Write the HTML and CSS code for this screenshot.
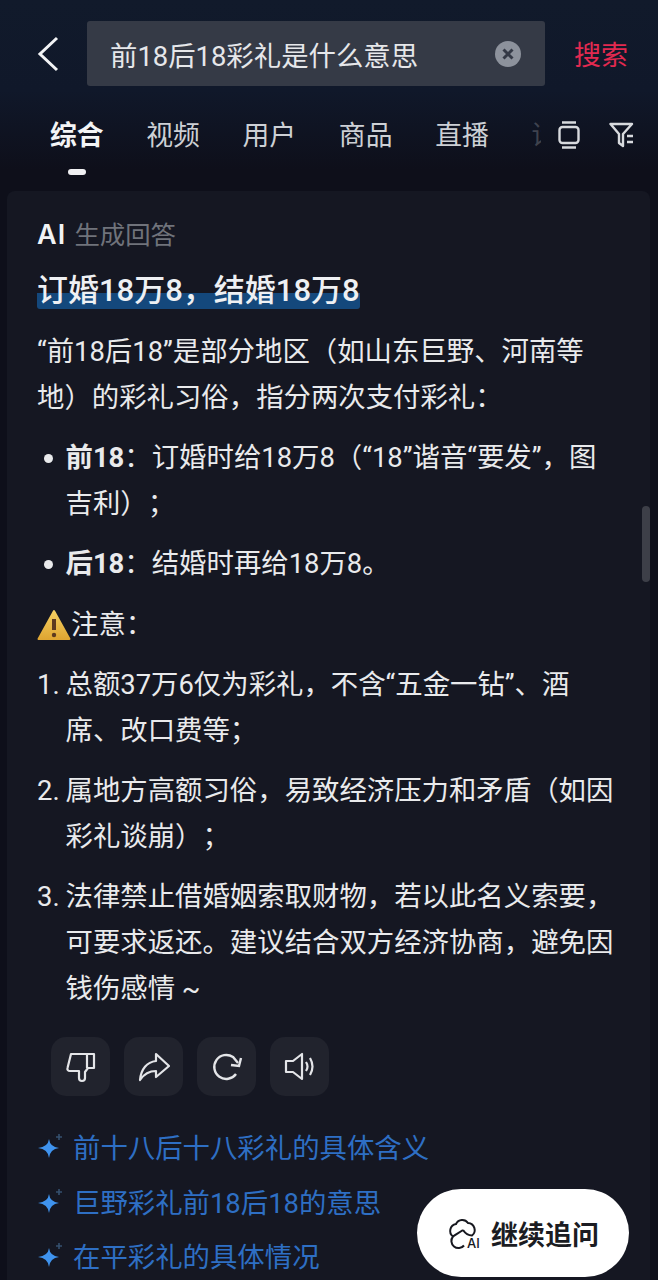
FILE: index.html
```html
<!DOCTYPE html>
<html lang="zh-CN">
<head>
    <meta charset="UTF-8">
    <title>搜索结果</title>
    <link rel="stylesheet" href="styles.css">
</head>
<body>
    <div class="page">
        <div class="search-bar">
            <svg class="back" width="24" height="36" viewBox="0 0 24 36"><path d="M20 2 L3 18 L20 34" fill="none" stroke="#f2f3f5" stroke-width="3"/></svg>
            <div class="search-box">
                <span class="query">前18后18彩礼是什么意思</span>
                <svg class="clear" width="26" height="26" viewBox="0 0 26 26"><circle cx="13" cy="13" r="13" fill="#8d929c"/><path d="M8.5 8.5 L17.5 17.5 M17.5 8.5 L8.5 17.5" stroke="#343946" stroke-width="3"/></svg>
            </div>
            <span class="search-btn">搜索</span>
        </div>

        <div class="tabs">
            <div class="tab-list">
                <span class="tab active">综合</span>
                <span class="tab">视频</span>
                <span class="tab">用户</span>
                <span class="tab">商品</span>
                <span class="tab">直播</span>
                <span class="tab tab-cut">话题</span>
            </div>
            <svg class="tab-icon" width="24" height="28" viewBox="0 0 24 28"><path d="M5 1.5 H19 M5 26.5 H19" stroke="#d8dade" stroke-width="2.4"/><rect x="2.5" y="6" width="19" height="16" rx="3" fill="none" stroke="#d8dade" stroke-width="2.4"/></svg>
            <svg class="tab-icon filter" width="26" height="26" viewBox="0 0 26 26"><path d="M1.5 2 H23 L14 12 V24 L10 21 V12 Z" fill="none" stroke="#d8dade" stroke-width="2.4" stroke-linejoin="round"/><path d="M18 14 H24 M18 20 H24" stroke="#d8dade" stroke-width="2.4"/></svg>
        </div>
        <div class="tab-mark"></div>

        <div class="card">
            <div class="ai-label"><b>AI</b> 生成回答</div>
            <h2 class="answer-title"><span>订婚18万8，结婚18万8</span></h2>
            <p class="para">“前18后18”是部分地区（如山东巨野、河南等地）的彩礼习俗，指分两次支付彩礼：</p>
            <ul class="bullets">
                <li><b>前18</b>：订婚时给18万8（“18”谐音“要发”，图吉利）；</li>
                <li><b>后18</b>：结婚时再给18万8。</li>
            </ul>
            <p class="para note"><svg width="34" height="32" viewBox="0 0 34 32"><defs><linearGradient id="warn" x1="0" y1="0" x2="0" y2="1"><stop offset="0" stop-color="#f4cf62"/><stop offset="1" stop-color="#dfa632"/></linearGradient></defs><path d="M17 2 L32.5 30 H1.5 Z" fill="url(#warn)" stroke="url(#warn)" stroke-width="2" stroke-linejoin="round"/><path d="M17 10 V21" stroke="#5c3a20" stroke-width="4"/><circle cx="17" cy="26" r="2.2" fill="#5c3a20"/></svg>注意：</p>
            <ol class="steps">
                <li>总额37万6仅为彩礼，不含“五金一钻”、酒席、改口费等；</li>
                <li>属地方高额习俗，易致经济压力和矛盾（如因彩礼谈崩）；</li>
                <li>法律禁止借婚姻索取财物，若以此名义索要，可要求返还。建议结合双方经济协商，避免因钱伤感情 ~</li>
            </ol>

            <div class="actions">
                <div class="action"><svg width="32" height="32" viewBox="0 0 32 32"><path d="M6 3 H29 V17 H23 L20 21 V27 C20 31 14 31 14 27 V20 H5 C3 20 2 18.500 2.500 17 Z M22 3 V17" fill="none" stroke="#e4e5e8" stroke-width="2.2" stroke-linejoin="round"/></svg></div>
                <div class="action"><svg width="32" height="32" viewBox="0 0 32 32"><path d="M18 3 L31 15 L18 26 V20 C11 20 6 23 2 29 C3 18 9 11 18 10 Z" fill="none" stroke="#e4e5e8" stroke-width="2.2" stroke-linejoin="round"/></svg></div>
                <div class="action"><svg width="32" height="32" viewBox="0 0 32 32"><path d="M25 23 A12 12 0 1 1 22 6 L27 12" fill="none" stroke="#e4e5e8" stroke-width="2.4"/><path d="M20 14 L28 15 L30 7" fill="none" stroke="#e4e5e8" stroke-width="2.4"/></svg></div>
                <div class="action"><svg width="32" height="32" viewBox="0 0 32 32"><path d="M2 10 H9 L18 3 V28 L9 21 H2 Z" fill="none" stroke="#e4e5e8" stroke-width="2.2" stroke-linejoin="round"/><path d="M22 11 Q25 15.500 22 20 M26 7 Q31 15.500 26 24" fill="none" stroke="#e4e5e8" stroke-width="2.2"/></svg></div>
            </div>

            <ul class="suggest">
                <li><svg width="26" height="26" viewBox="0 0 26 26"><path d="M12 6 Q13 14 22 15 Q13 16 12 25 Q11 16 1 15 Q11 14 12 6 Z" fill="#3f93ee"/><path d="M22 1 V7 M19 4 H25" stroke="#35506f" stroke-width="1.6"/></svg>前十八后十八彩礼的具体含义</li>
                <li><svg width="26" height="26" viewBox="0 0 26 26"><path d="M12 6 Q13 14 22 15 Q13 16 12 25 Q11 16 1 15 Q11 14 12 6 Z" fill="#3f93ee"/><path d="M22 1 V7 M19 4 H25" stroke="#35506f" stroke-width="1.6"/></svg>巨野彩礼前18后18的意思</li>
                <li><svg width="26" height="26" viewBox="0 0 26 26"><path d="M12 6 Q13 14 22 15 Q13 16 12 25 Q11 16 1 15 Q11 14 12 6 Z" fill="#3f93ee"/><path d="M22 1 V7 M19 4 H25" stroke="#35506f" stroke-width="1.6"/></svg>在平彩礼的具体情况</li>
            </ul>
        </div>

        <div class="scroll-thumb"></div>
        <div class="ask-btn">
            <svg width="36" height="36" viewBox="0 0 36 36"><path d="M17 30.500 A7 7 0 0 1 6 21.500 A7 7 0 0 1 9 9 A7 7 0 0 1 21 8 A7 7 0 0 1 25 20.500 C21 20.500 18 18 16 15 M6 21.500 C9 19 12 18 16 15" fill="none" stroke="#17181f" stroke-width="2"/><text x="20" y="33" class="ai-mark">AI</text></svg>
            <span>继续追问</span>
        </div>
    </div>
</body>
</html>
```

FILE: styles.css
```css
html, body {
    margin: 0;
    height: 100%;
}
body {
    background: #0e0f19;
    font-family: Roboto, "Noto Sans CJK SC", sans-serif;
    color: #e9eaec;
    text-spacing-trim: space-all;
}
.page {
    position: relative;
    width: 658px;
    height: 1280px;
    overflow: hidden;
    background: linear-gradient(180deg, #111a2b 0, #10182a 90px, #0e0f1a 170px);
}
.search-bar {
    display: flex;
    align-items: center;
    height: 65px;
    padding: 21px 29px 0 37px;
}
.back {
    width: 24px;
    margin-right: 26px;
}
.search-box {
    display: flex;
    align-items: center;
    justify-content: space-between;
    width: 458px;
    height: 65px;
    box-sizing: border-box;
    padding: 0 24px 0 23px;
    background: #353a46;
    border-radius: 3px;
}
.query {
    font-size: 27.4px;
    color: #e6e7ea;
}
.search-btn {
    margin-left: 29px;
    font-size: 27px;
    color: #e22a50;
}
.tabs {
    display: flex;
    align-items: center;
    height: 40px;
    margin-top: 29px;
    padding-left: 50px;
}
.tab-list {
    display: flex;
    gap: 42.7px;
    width: 491px;
    overflow: hidden;
    padding-bottom: 4px;
}
.tab {
    font-size: 26.8px;
    color: #cdd0d5;
    white-space: nowrap;
}
.tab.active {
    font-weight: 700;
    color: #f3f4f6;
}
.tab-cut {
    opacity: 0.25;
}
.tab-icon {
    flex: none;
    margin-left: 16px;
}
.tab-icon.filter {
    margin-left: 28px;
}
.tab-mark {
    width: 18px;
    height: 6px;
    margin: 14px 0 0 68px;
    background: #f0f0f2;
    border-radius: 3px;
}
.card {
    margin: 16px 8px 0 7px;
    padding: 26px 30px 0;
    height: 1100px;
    background: #151722;
    border-radius: 8px;
}
.ai-label {
    font-size: 25.4px;
    line-height: 36px;
    color: #70737b;
}
.ai-label b {
    font-family: Inter, sans-serif;
    font-size: 27px;
    font-weight: 600;
    letter-spacing: 1px;
    margin-right: 2px;
    color: #f2f3f5;
}
.answer-title {
    margin: 18px 0 0;
    font-size: 31px;
    font-weight: 500;
    line-height: 40px;
    color: #eef0f3;
}
.answer-title span {
    background: linear-gradient(180deg, transparent 58%, #14487c 58%, #14487c 100%);
    border-radius: 3px;
}
.para {
    margin: 18px 0 0;
    padding-right: 12px;
    font-size: 27.4px;
    line-height: 46px;
}
.note {
    display: flex;
    align-items: center;
    margin-top: 15px;
}
ul, ol {
    list-style: none;
    margin: 0;
    padding: 0;
}
.bullets li, .steps li {
    position: relative;
    margin-top: 14px;
    padding-left: 28.5px;
    font-size: 27.4px;
    line-height: 46px;
}
.bullets li::before {
    content: "";
    position: absolute;
    left: 7px;
    top: 19px;
    width: 9px;
    height: 9px;
    border-radius: 50%;
    background: #e9eaec;
}
.steps {
    counter-reset: step;
}
.steps li::before {
    counter-increment: step;
    content: counter(step) ".";
    position: absolute;
    left: 0;
}
.actions {
    display: flex;
    gap: 14px;
    margin: 25px 0 0 14px;
}
.action {
    display: flex;
    align-items: center;
    justify-content: center;
    width: 59px;
    height: 59px;
    background: #21232d;
    border-radius: 15px;
}
.suggest {
    margin-top: 23px;
}
.suggest li {
    display: flex;
    align-items: center;
    gap: 10px;
    height: 54.5px;
    font-size: 27.4px;
    color: #2e6fc4;
}
.scroll-thumb {
    position: absolute;
    left: 642px;
    top: 506px;
    width: 8px;
    height: 76px;
    background: #3d3f48;
    border-radius: 4px;
}
.ask-btn {
    position: absolute;
    left: 417px;
    top: 1189px;
    width: 212px;
    height: 88px;
    display: flex;
    align-items: center;
    justify-content: center;
    gap: 8px;
    background: #fff;
    border-radius: 44px;
    font-size: 27px;
    font-weight: 700;
    color: #1b1c22;
}
.ai-mark {
    font-family: Inter, sans-serif;
    font-size: 13px;
    font-weight: 500;
    fill: #17181f;
}
```
